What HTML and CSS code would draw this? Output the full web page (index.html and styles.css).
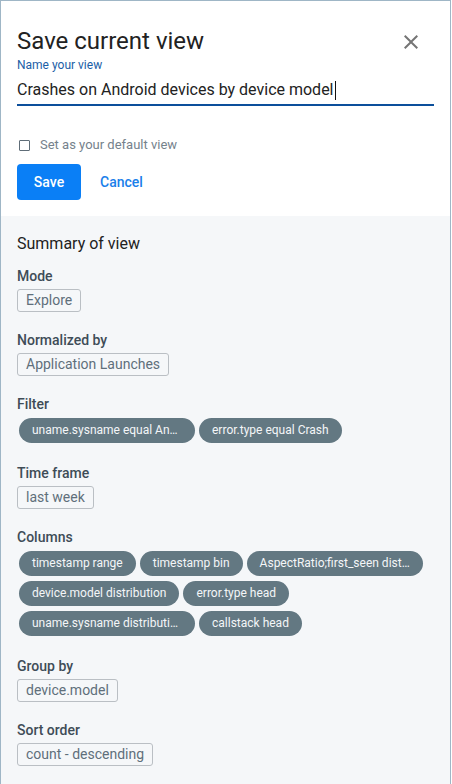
FILE: index.html
```html
<!DOCTYPE html>
<html lang="en">
<head>
<meta charset="utf-8">
<title>Save current view</title>
<link rel="stylesheet" href="styles.css">
</head>
<body>
<div class="panel">
  <div class="top">
    <div class="header">
      <h1 class="title">Save current view</h1>
      <button class="close" aria-label="Close">
        <svg width="24" height="24" viewBox="0 0 24 24"><path d="M19 6.41L17.59 5 12 10.59 6.41 5 5 6.41 10.59 12 5 17.59 6.41 19 12 13.41 17.59 19 19 17.59 13.41 12z" fill="#757575"/></svg>
      </button>
    </div>
    <label class="field-label">Name your view</label>
    <div class="input"><span>Crashes on Android devices by device model</span><span class="caret"></span></div>
    <div class="check-row">
      <span class="checkbox"></span>
      <span class="check-label">Set as your default view</span>
    </div>
    <div class="actions">
      <button class="btn-primary">Save</button>
      <button class="btn-text">Cancel</button>
    </div>
  </div>
  <div class="summary">
    <h2 class="summary-title">Summary of view</h2>

    <div class="section">
      <div class="section-label">Mode</div>
      <div class="tags"><span class="tag">Explore</span></div>
    </div>

    <div class="section">
      <div class="section-label">Normalized by</div>
      <div class="tags"><span class="tag">Application Launches</span></div>
    </div>

    <div class="section">
      <div class="section-label">Filter</div>
      <div class="pills">
        <span class="pill pill-wide" title="uname.sysname equal Android">uname.sysname equal An…</span>
        <span class="pill">error.type equal Crash</span>
      </div>
    </div>

    <div class="section">
      <div class="section-label">Time frame</div>
      <div class="tags"><span class="tag">last week</span></div>
    </div>

    <div class="section">
      <div class="section-label">Columns</div>
      <div class="pills">
        <span class="pill">timestamp range</span>
        <span class="pill">timestamp bin</span>
        <span class="pill pill-wide" title="AspectRatio;first_seen distribution">AspectRatio;first_seen dist…</span>
        <span class="pill">device.model distribution</span>
        <span class="pill">error.type head</span>
        <span class="pill pill-wide" title="uname.sysname distribution">uname.sysname distributi…</span>
        <span class="pill">callstack head</span>
      </div>
    </div>

    <div class="section">
      <div class="section-label">Group by</div>
      <div class="tags"><span class="tag">device.model</span></div>
    </div>

    <div class="section">
      <div class="section-label">Sort order</div>
      <div class="tags"><span class="tag">count - descending</span></div>
    </div>
  </div>
</div>
</body>
</html>
```
FILE: styles.css
```css
* { box-sizing: border-box; }
html, body { margin: 0; padding: 0; background: #ffffff; }
body {
  font-family: Roboto, "Liberation Sans", Arial, sans-serif;
  width: 452px;
  height: 784px;
  overflow: hidden;
}
.panel {
  width: 451px;
  height: 784px;
  border: 1px solid #9fb6c6;
  border-bottom: none;
  display: flex;
  flex-direction: column;
  background: #f5f7f9;
}
.top {
  background: #ffffff;
  padding: 24px 16px 16px 16px;
}
.header {
  display: flex;
  align-items: center;
  justify-content: space-between;
}
.title {
  margin: 0;
  font-size: 24px;
  line-height: 32px;
  font-weight: 400;
  color: #222222;
}
.close {
  width: 24px;
  height: 24px;
  padding: 0;
  margin: 2px 11px 0 0;
  border: none;
  background: none;
  display: flex;
}
.field-label {
  display: block;
  font-size: 12px;
  line-height: 16px;
  color: #1b5ea6;
}
.input {
  display: flex;
  align-items: center;
  padding: 5px 0 2px;
  height: 33px;
  font-size: 16px;
  line-height: 24px;
  color: #222222;
  border-bottom: 2px solid #0c4f9b;
}
.caret {
  display: inline-block;
  width: 1px;
  height: 19px;
  background: #111111;
  margin-left: 1px;
}
.check-row {
  display: flex;
  align-items: center;
  margin-top: 29px;
  height: 20px;
}
.checkbox {
  width: 11px;
  height: 11px;
  border: 1.5px solid #5f6d78;
  border-radius: 1px;
  margin-left: 2px;
  margin-right: 10px;
}
.check-label {
  font-size: 13px;
  line-height: 20px;
  color: #75828c;
}
.actions {
  display: flex;
  align-items: center;
  margin-top: 9px;
}
.btn-primary {
  height: 36px;
  padding: 0 16px;
  min-width: 64px;
  border: none;
  border-radius: 4px;
  background: #0a7ff6;
  color: #ffffff;
  font-family: inherit;
  font-size: 14px;
  font-weight: 500;
}
.btn-text {
  margin-left: 19px;
  padding: 0;
  border: none;
  background: none;
  color: #1a80ea;
  font-family: inherit;
  font-size: 14px;
  font-weight: 500;
}
.summary {
  flex: 1;
  padding: 16px 16px 0 16px;
}
.summary-title {
  margin: 0 0 10px;
  font-size: 16px;
  line-height: 24px;
  font-weight: 400;
  color: #222222;
}
.section { margin-bottom: 18px; }
.section-label {
  font-size: 14px;
  line-height: 20px;
  font-weight: 500;
  color: #3e4c57;
  margin-bottom: 3px;
}
.tags { display: flex; flex-wrap: wrap; gap: 4px; }
.tag {
  display: inline-block;
  height: 23px;
  padding: 0 8px;
  border: 1px solid #babfc4;
  border-radius: 3px;
  font-size: 14px;
  line-height: 21px;
  color: #5f6f7b;
}
.pills {
  display: flex;
  flex-wrap: wrap;
  gap: 5px 4px;
  padding: 1px 2px 2px;
}
.pill {
  display: inline-block;
  height: 25px;
  padding: 0 13px;
  border-radius: 13px;
  background: #637882;
  color: #f4f6f8;
  font-size: 12px;
  line-height: 25px;
  white-space: nowrap;
}
.pill-wide { width: 176px; }
```
